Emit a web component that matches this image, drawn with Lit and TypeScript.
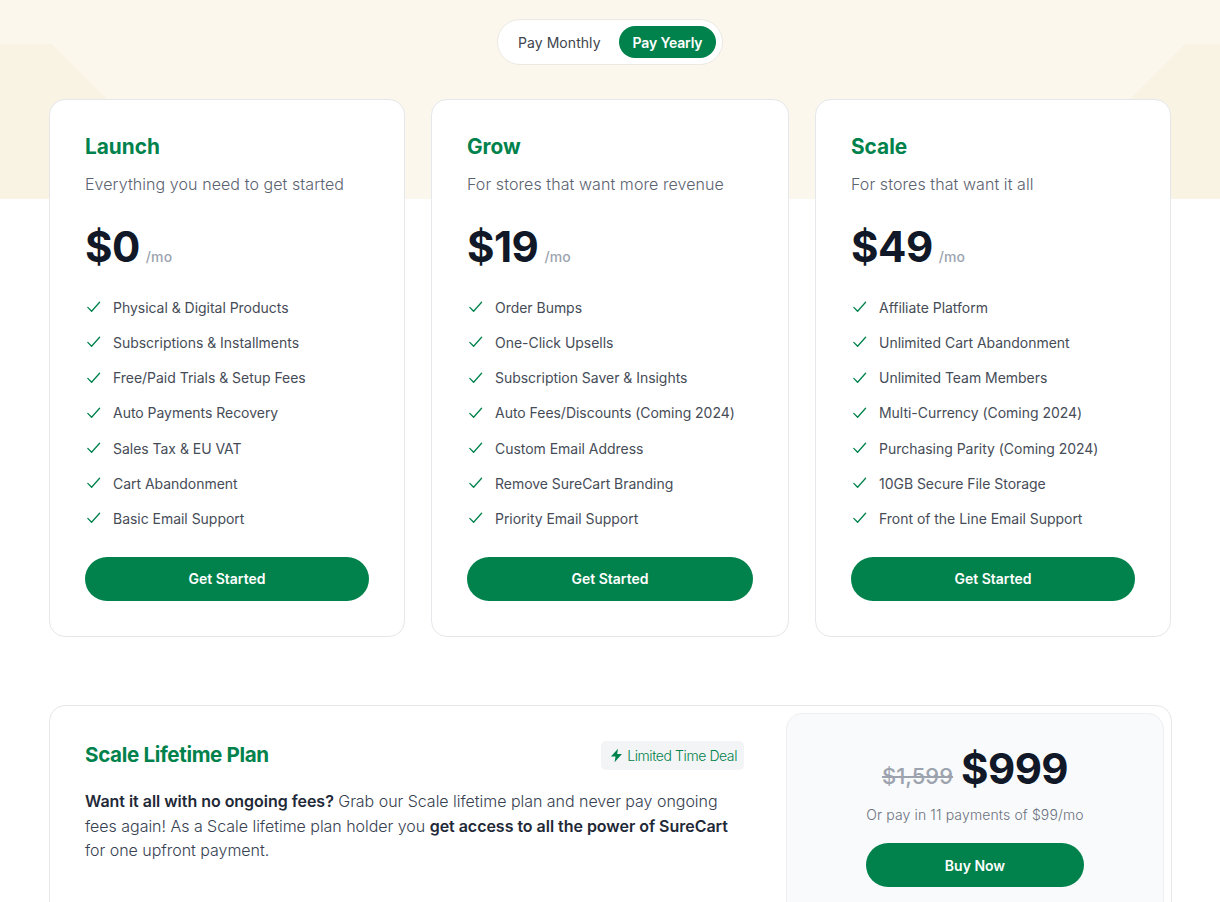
import { LitElement, html, css, svg } from "lit";
import { customElement } from "lit/decorators.js";

const plans = [
  { name: "Launch", desc: "Everything you need to get started", price: "$0", features: ["Physical & Digital Products", "Subscriptions & Installments", "Free/Paid Trials & Setup Fees", "Auto Payments Recovery", "Sales Tax & EU VAT", "Cart Abandonment", "Basic Email Support"] },
  { name: "Grow", desc: "For stores that want more revenue", price: "$19", features: ["Order Bumps", "One-Click Upsells", "Subscription Saver & Insights", "Auto Fees/Discounts (Coming 2024)", "Custom Email Address", "Remove SureCart Branding", "Priority Email Support"] },
  { name: "Scale", desc: "For stores that want it all", price: "$49", features: ["Affiliate Platform", "Unlimited Cart Abandonment", "Unlimited Team Members", "Multi-Currency (Coming 2024)", "Purchasing Parity (Coming 2024)", "10GB Secure File Storage", "Front of the Line Email Support"] },
];

const check = svg`<path d="M2.8 8.4 L6.6 12.3 L14.6 3.2" fill="none" stroke="#01824c" stroke-width="1.3" stroke-linecap="round" stroke-linejoin="round"/>`;

@customElement("app-root")
export class AppRoot extends LitElement {
  static styles = css`
    :host { display: block; position: relative; height: 902px; overflow: hidden; background: #fff; font-family: Inter, "Noto Sans", sans-serif; color: #111827; }
    .band { position: absolute; top: 0; left: 0; width: 1220px; height: 199px; }
    .page { position: relative; display: flex; flex-direction: column; padding: 19px 49px 0; }
    .toggle { align-self: center; display: flex; align-items: center; box-sizing: border-box; width: 226px; height: 46px; padding: 0 6px 0 20px; justify-content: space-between; background: #fff; border: 1px solid #ece9e3; border-radius: 23px; font-size: 14px; letter-spacing: .06px; color: #40454d; }
    .on { display: flex; align-items: center; justify-content: center; width: 97px; height: 32px; border-radius: 16px; background: #01824c; color: #fff; font-weight: 600; letter-spacing: -.15px; }
    .plans { display: grid; grid-template-columns: 356px 358px 356px; gap: 26px; margin-top: 34px; }
    .card { min-width: 0; box-sizing: border-box; height: 538px; padding: 35px 35px 0; background: #fff; border: 1px solid #e5e7eb; border-radius: 16px; display: flex; flex-direction: column; }
    .name { font-size: 20.8px; line-height: 24px; font-weight: 700; color: #01824c; }
    .desc { margin-top: 13px; font-size: 16px; line-height: 24px; color: #5b6270; letter-spacing: .08px; font-weight: 300; }
    .price { display: flex; align-items: baseline; gap: 6px; margin-top: 23px; height: 56px; }
    .amt { font-size: 42px; line-height: 56px; font-weight: 700; letter-spacing: -.5px; color: #111827; }
    .mo { font-size: 14px; color: #9ca3af; font-weight: 500; letter-spacing: .1px; }
    ul { list-style: none; margin: 21.8px 0 0; padding: 0; display: flex; flex-direction: column; gap: 14.2px; }
    li { display: flex; align-items: center; gap: 12px; height: 21px; font-size: 14px; letter-spacing: -.03px; color: #464c57; }
    li svg { width: 16px; height: 16px; flex: none; }
    .btn { display: flex; align-items: center; justify-content: center; height: 44px; border-radius: 22px; background: #01824c; color: #fff; font-size: 14px; font-weight: 600; }
    .card .btn { margin-top: 28px; }
    .life { display: flex; margin: 68px -1px 0 0; box-sizing: border-box; height: 260px; padding: 7px 7px 0 35px; background: #fff; border: 1px solid #e5e7eb; border-radius: 16px; }
    .left { flex: none; width: 659px; padding-top: 26px; }
    .head { display: flex; align-items: center; justify-content: space-between; height: 30px; }
    .title { font-size: 20.6px; font-weight: 700; color: #01824c; letter-spacing: -.35px; }
    .badge { display: flex; align-items: center; gap: 3px; box-sizing: border-box; height: 29px; margin-top: 3px; padding: 0 7px 0 8px; background: #f3f4f6; border-radius: 5px; font-size: 14px; letter-spacing: -.42px; color: #01824c; font-weight: 300; }
    .badge svg { width: 15px; height: 15px; }
    p { margin: 20px 0 0; font-size: 16px; line-height: 24.5px; color: #374151; font-weight: 300; letter-spacing: -.03px; width: 659px; }
    b { font-weight: 600; color: #1f2937; }
    .panel { margin-left: 42px; flex: none; box-sizing: border-box; width: 378px; height: 260px; padding-top: 27px; display: flex; flex-direction: column; align-items: center; background: #f9fafb; border: 1px solid #eeeff2; border-radius: 16px; }
    .prices { display: flex; align-items: baseline; gap: 8px; height: 56px; }
    s { font-size: 22px; color: #9ca3af; font-weight: 500; }
    .big { font-size: 42px; line-height: 56px; font-weight: 700; letter-spacing: -.6px; color: #111827; }
    .or { margin-top: 8px; font-size: 14px; line-height: 20px; color: #6b7280; font-weight: 300; letter-spacing: .13px; }
    .panel .btn { margin-top: 18px; width: 218px; }
  `;

  render() {
    return html`
      <svg class="band" viewBox="0 0 1220 199" aria-hidden="true">
        <rect width="1220" height="199" fill="#fbf7ed"/>
        <path d="M0 44H52L207 199H0Z" fill="#f9f3e3"/>
        <path d="M1220 44H1185L1030 199H1220Z" fill="#f9f3e3"/>
      </svg>
      <div class="page">
        <div class="toggle"><span>Pay Monthly</span><span class="on">Pay Yearly</span></div>
        <div class="plans">
          ${plans.map((p) => html`
            <div class="card">
              <div class="name">${p.name}</div>
              <div class="desc">${p.desc}</div>
              <div class="price"><span class="amt">${p.price}</span><span class="mo">/mo</span></div>
              <ul>${p.features.map((f) => html`<li><svg viewBox="0 0 16 16">${check}</svg>${f}</li>`)}</ul>
              <div class="btn">Get Started</div>
            </div>`)}
        </div>
        <div class="life">
          <div class="left">
            <div class="head">
              <span class="title">Scale Lifetime Plan</span>
              <span class="badge"><svg viewBox="0 0 14 14"><path d="M8.4 .6 1.8 8h4.3l-.9 5.4 6.9-7.7H7.6Z" fill="#01824c"/></svg>Limited Time Deal</span>
            </div>
            <p><b>Want it all with no ongoing fees?</b> Grab our Scale lifetime plan and never pay ongoing fees again! As a Scale lifetime plan holder you <b>get access to all the power of SureCart</b> for one upfront payment.</p>
          </div>
          <div class="panel">
            <div class="prices"><s>$1,599</s><span class="big">$999</span></div>
            <div class="or">Or pay in 11 payments of $99/mo</div>
            <div class="btn">Buy Now</div>
          </div>
        </div>
      </div>`;
  }
}
